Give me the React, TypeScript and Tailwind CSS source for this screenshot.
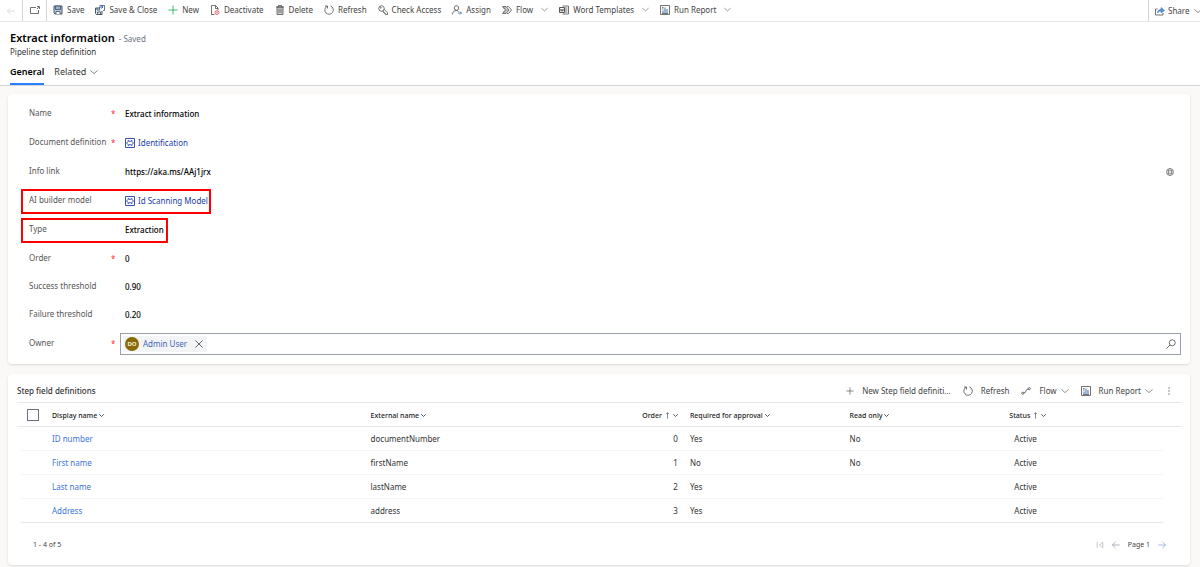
import type { ReactNode } from "react";

const FONT = "font-['Noto_Sans','Open_Sans',sans-serif]";

type IconProps = { className?: string };

function Svg({ className = "size-[10px]", children }: IconProps & { children: ReactNode }) {
  return (
    <svg
      viewBox="0 0 20 20"
      fill="none"
      stroke="currentColor"
      strokeWidth="1.5"
      aria-hidden="true"
      className={`shrink-0 ${className}`}
    >
      {children}
    </svg>
  );
}

const Chevron = ({ className = "size-2" }: IconProps) => (
  <Svg className={className}>
    <path d="M1 6l9 8 9-8" />
  </Svg>
);

const BackArrow = ({ className }: IconProps) => (
  <Svg className={className}>
    <path d="M19 10H1M9 2l-8 8 8 8" strokeWidth="2" />
  </Svg>
);

const ForwardArrow = ({ className }: IconProps) => (
  <Svg className={className}>
    <path d="M1 10h18M11 2l8 8-8 8" strokeWidth="2" />
  </Svg>
);

const OpenWindow = () => (
  <Svg>
    <path d="M12 5H1v12h16v-7" />
    <path d="M14 3h5v5M18 4l-4 4" />
  </Svg>
);

const SaveIcon = () => (
  <Svg>
    <path d="M2 2h16v16H4l-2-2z" fill="#b8cfe8" stroke="#3b4654" strokeWidth="1.8" />
    <path d="M5 2h10v7H5z" fill="#8fb4dc" stroke="#3b4654" />
    <path d="M6 18v-5h8v5" fill="#fff" stroke="#3b4654" />
  </Svg>
);

const SaveCloseIcon = () => (
  <Svg>
    <path d="M8 6H1v11l2 2h11v-7" fill="#dfe7f0" stroke="#3b4654" strokeWidth="1.8" />
    <path d="M5 19v-5h6v5M4 6v4h6" stroke="#3b4654" />
    <path d="M9 9V4h7M13 1l3 3-3 3" stroke="#2b66b1" strokeWidth="2" />
    <path d="M9 1h10v10h-3" stroke="#3b4654" />
  </Svg>
);

const PlusIcon = ({ className }: IconProps) => (
  <Svg className={className}>
    <path d="M10 1v18M1 10h18" />
  </Svg>
);

const DeactivateIcon = () => (
  <Svg>
    <path d="M9 19H3V1h8l5 5v4M11 1v6h5" />
    <circle cx="14" cy="15" r="4" stroke="#e05252" />
    <path d="M11 12l6 6M17 12l-6 6" stroke="#e05252" strokeWidth="1.2" />
  </Svg>
);

const TrashIcon = () => (
  <Svg>
    <path d="M4 4h12v15H4z" fill="#d4d4d4" />
    <path d="M2 4h16M7 4V1h6v3M8 7v9M12 7v9" />
  </Svg>
);

const RefreshIcon = () => (
  <Svg>
    <path d="M13 2a8.500 8.500 0 1 1-7 .6M2 2h5v5" />
  </Svg>
);

const KeyIcon = () => (
  <Svg>
    <circle cx="7" cy="7" r="5.500" />
    <circle cx="5.500" cy="5.500" r="1" />
    <path d="M12 8.500l7 7V19h-4v-2h-2v-2h-2v-2l-2-1" />
  </Svg>
);

const AssignIcon = () => (
  <Svg>
    <circle cx="9" cy="6" r="4.600" />
    <path d="M1 19c0-5 3-8 8-8 2 0 3 1 4 2" />
    <path d="M12 16h7M16 13l3 3-3 3" stroke="#2b66b1" />
  </Svg>
);

const FlowIcon = () => (
  <Svg>
    <path d="M1 3h7l6 7-6 7H1l6-7zM10 3h3l6 7-6 7h-3M3 6h6M3 14h6M7 10h6" />
  </Svg>
);

const WordIcon = () => (
  <Svg>
    <path d="M7 2h12v16H7M12 6h5M12 10h5M12 14h5" />
    <path d="M1 5h10v10H1z" fill="#fff" strokeWidth="1.8" />
    <path d="M3 7.500l1.300 5L6 8.500l1.700 4L9 7.500" />
  </Svg>
);

const ReportIcon = () => (
  <Svg>
    <path d="M1 1h18v18H1z" />
    <path d="M6 16v-5M10 16V5M14 16V8" stroke="#3d6ea8" strokeWidth="2" />
    <path d="M4 5h3M4 8h3M4 17h12" />
  </Svg>
);

const ShareIcon = () => (
  <Svg>
    <path d="M5 6H1v12h15v-4" />
    <path d="M5 14c0-5 3-7 7-7V3l7 6-7 5v-4c-3 0-5 1-7 4z" fill="#5b95d6" stroke="#2b66b1" strokeWidth="1" />
  </Svg>
);

const ConnectIcon = () => (
  <Svg>
    <circle cx="3.500" cy="14.500" r="2.200" />
    <circle cx="16.500" cy="5.500" r="2.200" />
    <path d="M5.500 14c6 0 3-8 9-8" />
  </Svg>
);

const EntityIcon = () => (
  <Svg>
    <path d="M1 1h18v18H1z" strokeWidth="1.8" />
    <path d="M6 7l-3 3 3 3M14 7l3 3-3 3M6 7V5l4 2 4-2v2M6 13v2l4-2 4 2v-2" strokeWidth="1.8" />
  </Svg>
);

const GlobeIcon = () => (
  <Svg className="size-2">
    <circle cx="10" cy="10" r="8.800" />
    <ellipse cx="10" cy="10" rx="4" ry="8.800" />
    <path d="M2 7h16M2 13h16" />
  </Svg>
);

const SearchIcon = () => (
  <Svg>
    <circle cx="12.500" cy="7.500" r="6" />
    <path d="M8 12l-7 7" />
  </Svg>
);

const commands = [
  { label: "Save", icon: <SaveIcon /> },
  { label: "Save & Close", icon: <SaveCloseIcon /> },
  { label: "New", icon: <PlusIcon className="size-[10px] text-green-600" /> },
  { label: "Deactivate", icon: <DeactivateIcon /> },
  { label: "Delete", icon: <TrashIcon /> },
  { label: "Refresh", icon: <RefreshIcon /> },
  { label: "Check Access", icon: <KeyIcon /> },
  { label: "Assign", icon: <AssignIcon /> },
  { label: "Flow", icon: <FlowIcon />, menu: true },
  { label: "Word Templates", icon: <WordIcon />, menu: true },
  { label: "Run Report", icon: <ReportIcon />, menu: true },
];

const rows = [
  { name: "ID number", external: "documentNumber", order: 0, required: "Yes", readOnly: "No" },
  { name: "First name", external: "firstName", order: 1, required: "No", readOnly: "No" },
  { name: "Last name", external: "lastName", order: 2, required: "Yes", readOnly: "" },
  { name: "Address", external: "address", order: 3, required: "Yes", readOnly: "" },
];

function CommandBar() {
  return (
    <div className="flex h-[22px] items-stretch border-b border-gray-200 bg-white text-[#444]">
      <button aria-label="Back" className="flex w-[22px] items-center justify-center text-gray-300">
        <BackArrow className="size-2" />
      </button>
      <button aria-label="Open in new window" className="flex w-[25px] items-center justify-center border-x border-gray-300 pb-0.5">
        <OpenWindow />
      </button>
      <div className="flex flex-1 items-center gap-[11px] pb-0.5 pl-1.5">
        {commands.map((c) => (
          <button key={c.label} className="flex items-center gap-1 whitespace-nowrap">
            {c.icon}
            {c.label}
            {c.menu && <Chevron className="ml-1 size-[7px]" />}
          </button>
        ))}
      </div>
      <button className="flex w-[52px] items-center gap-[3px] overflow-hidden border-l border-gray-300 pl-1.5">
        <ShareIcon />
        Share
        <Chevron className="ml-0.5 size-2" />
      </button>
    </div>
  );
}

function Header() {
  return (
    <header className="border-b border-gray-300 bg-white px-[10px] pt-2">
      <div className="flex items-baseline gap-1">
        <h1 className="text-[11px] leading-4 font-semibold text-black">Extract information</h1>
        <span className="text-gray-500">- Saved</span>
      </div>
      <p className="leading-3 text-[#333]">Pipeline step definition</p>
      <div role="tablist" className="mt-1.5 flex gap-2.5 text-[9px]">
        <button role="tab" aria-selected="true" className="border-b-2 border-blue-500 pt-1 pb-[7px] leading-[8px] font-semibold text-black">
          General
        </button>
        <button role="tab" aria-selected="false" className="flex items-center gap-1 pb-[5px] text-[#333]">
          Related
          <Chevron />
        </button>
      </div>
    </header>
  );
}

type FieldProps = {
  id: string;
  label: string;
  required?: boolean;
  tall?: boolean;
  highlight?: ReactNode;
  children: ReactNode;
};

function Field({ id, label, required, tall = true, highlight, children }: FieldProps) {
  return (
    <div className={`relative flex items-center ${tall ? "h-[29px]" : "h-7"}`}>
      <label htmlFor={id} className="w-[82px] shrink-0 pb-0.5 text-[#555]">
        {label}
      </label>
      <span className="w-[14px] shrink-0 text-red-500">{required && "*"}</span>
      {children}
      {highlight}
    </div>
  );
}

const inputClass = "min-w-0 flex-1 bg-transparent font-medium text-black outline-none";

function Lookup({ id, text }: { id: string; text: string }) {
  return (
    <a id={id} href="#" className="flex items-center gap-[3px] text-[#2040a8]">
      <EntityIcon />
      {text}
    </a>
  );
}

function DetailsForm() {
  return (
    <form className="rounded-sm bg-white pt-[5px] pr-[9px] pb-1.5 pl-[21px] shadow">
      <Field id="name" label="Name" required>
        <input id="name" defaultValue="Extract information" className={inputClass} />
      </Field>
      <Field id="document" label="Document definition" required>
        <Lookup id="document" text="Identification" />
      </Field>
      <Field id="info" label="Info link">
        <input id="info" defaultValue="https://aka.ms/AAj1jrx" className={inputClass} />
        <button type="button" aria-label="Open link" className="mr-[7px] text-[#555]">
          <GlobeIcon />
        </button>
      </Field>
      <Field
        id="model"
        label="AI builder model"
        highlight={<span className="pointer-events-none absolute top-[3px] bottom-px -left-2 w-[190px] border-2 border-[#f00]" />}
      >
        <Lookup id="model" text="Id Scanning Model" />
      </Field>
      <Field
        id="type"
        label="Type"
        highlight={<span className="pointer-events-none absolute top-[3px] bottom-px -left-2 w-[147px] border-2 border-[#f00]" />}
      >
        <select id="type" className={`appearance-none ${inputClass}`}>
          <option>Extraction</option>
        </select>
      </Field>
      <Field id="order" label="Order" required>
        <input id="order" defaultValue="0" className={inputClass} />
      </Field>
      <Field id="success" label="Success threshold" tall={false}>
        <input id="success" defaultValue="0.90" className={inputClass} />
      </Field>
      <Field id="failure" label="Failure threshold" tall={false}>
        <input id="failure" defaultValue="0.20" className={inputClass} />
      </Field>
      <Field id="owner" label="Owner" required>
        <div className="-ml-[5px] flex h-[22px] min-w-0 flex-1 items-center border border-gray-400 pr-1 pl-0.5">
          <span className="flex h-4 items-center bg-gray-100 pr-1 pl-0.5 text-[#3f66b8]">
            <span className="mr-1 flex size-[14px] items-center justify-center rounded-full bg-[#8a6a00] text-[6px] font-semibold text-white">
              DO
            </span>
            Admin User
            <button type="button" aria-label="Remove Admin User" className="ml-2 text-[#444]">
              <Svg className="size-2">
                <path d="M1 1l18 18M19 1L1 19" strokeWidth="2" />
              </Svg>
            </button>
          </span>
          <input id="owner" className="min-w-0 flex-1 bg-transparent outline-none" />
          <button type="button" aria-label="Search" className="text-[#444]">
            <SearchIcon />
          </button>
        </div>
      </Field>
    </form>
  );
}

function ColumnHead({ label, sorted }: { label: string; sorted?: boolean }) {
  return (
    <button className="inline-flex items-center gap-0.5 pt-0.5 align-middle whitespace-nowrap">
      {label}
      {sorted && (
        <Svg className="size-[7px]">
          <path d="M10 19V2M6 6l4-4 4 4" />
        </Svg>
      )}
      <Svg className="size-[5px]">
        <path d="M1 5l9 9 9-9" strokeWidth="3" />
      </Svg>
    </button>
  );
}

function FieldDefinitions() {
  const th = "border-y border-gray-200 px-1.5 font-medium";
  const td = "border-b border-gray-100 px-1.5";
  return (
    <section className="rounded-sm bg-white pr-[9px] pl-[9px] shadow">
      <div className="flex h-7 items-center justify-between pt-1.5 text-[#444]">
        <h2 className="font-medium text-[#333]">Step field definitions</h2>
        <div className="flex items-center gap-3 pr-2">
          <button className="flex items-center gap-2">
            <PlusIcon className="size-2" />
            New Step field definiti...
          </button>
          <button className="flex items-center gap-2">
            <RefreshIcon />
            Refresh
          </button>
          <button className="flex items-center gap-2">
            <ConnectIcon />
            Flow
            <Chevron className="-ml-1 size-2" />
          </button>
          <button className="flex items-center gap-2">
            <ReportIcon />
            Run Report
            <Chevron className="-ml-1 size-2" />
          </button>
          <button aria-label="More commands">
            <Svg className="size-2">
              <path d="M10 1v3M10 8.500v3M10 16v3" strokeWidth="2.500" />
            </Svg>
          </button>
        </div>
      </div>
      <table className="w-full table-fixed border-separate border-spacing-0 text-left">
        <colgroup>
          <col className="w-1" />
          <col className="w-[25px]" />
          <col />
          <col className="w-[13.72%]" />
          <col className="w-[13.72%]" />
          <col className="w-[13.72%]" />
          <col className="w-[13.72%]" />
          <col className="w-[13.72%]" />
          <col className="w-[18px]" />
        </colgroup>
        <thead className="text-[7px] text-[#222]">
          <tr className="h-[25px]">
            <th colSpan={2} className="border-y border-gray-200 pl-[10px]">
              <input
                type="checkbox"
                aria-label="Select all"
                className="block size-3 appearance-none border border-gray-500"
              />
            </th>
            <th className={th}><ColumnHead label="Display name" /></th>
            <th className={th}><ColumnHead label="External name" /></th>
            <th className={`${th} text-right`}><ColumnHead label="Order" sorted /></th>
            <th className={th}><ColumnHead label="Required for approval" /></th>
            <th className={th}><ColumnHead label="Read only" /></th>
            <th colSpan={2} className={th}><ColumnHead label="Status" sorted /></th>
          </tr>
        </thead>
        <tbody className="text-[#333] [&>tr:last-child>td]:border-gray-200">
          {rows.map((r) => (
            <tr key={r.name} className="h-6">
              <td className="border-0 p-0" />
              <td className={td} />
              <td className={td}>
                <a href="#" className="text-[#3b76d6]">{r.name}</a>
              </td>
              <td className={td}>{r.external}</td>
              <td className={`${td} text-right`}>{r.order}</td>
              <td className={td}>{r.required}</td>
              <td className={td}>{r.readOnly}</td>
              <td className="border-b border-gray-100 pl-[11px]">Active</td>
              <td className="border-0 p-0" />
            </tr>
          ))}
        </tbody>
      </table>
      <div className="flex h-[42px] items-center justify-between pt-0.5 pr-[15px] pl-4 text-[7px] text-[#444]">
        <span>1 - 4 of 5</span>
        <div className="flex items-center gap-2">
          <button aria-label="First page" className="text-gray-400">
            <Svg className="size-2">
              <path d="M3 2v16M17 3l-8 7 8 7z" />
            </Svg>
          </button>
          <button aria-label="Previous page" className="text-gray-400">
            <BackArrow className="size-2" />
          </button>
          <span>Page 1</span>
          <button aria-label="Next page" className="text-[#8fa8e8]">
            <ForwardArrow className="size-2" />
          </button>
        </div>
      </div>
    </section>
  );
}

export default function App() {
  return (
    <div className={`min-h-screen bg-[#faf9f8] text-[8px] leading-3 ${FONT}`}>
      <CommandBar />
      <Header />
      <main className="flex flex-col gap-[10px] px-2 pt-2 pr-[10px]">
        <DetailsForm />
        <FieldDefinitions />
      </main>
    </div>
  );
}
